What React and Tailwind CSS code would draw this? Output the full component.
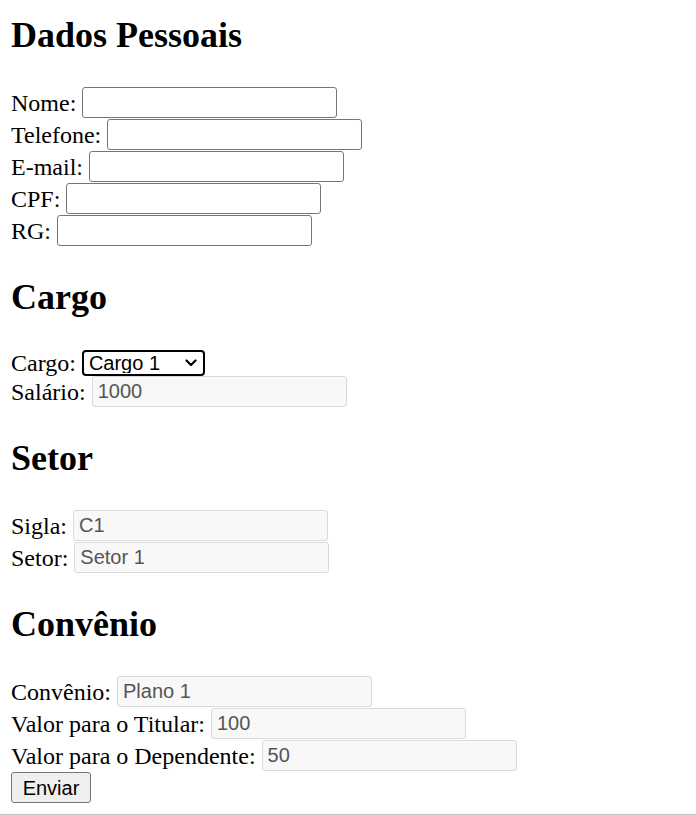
import React from "react";

const inputBase =
  "h-[31px] w-[255px] rounded-[3px] border-[1.5px] pl-[5px] pr-[3px] font-['Liberation_Sans',Arial,sans-serif] text-[20px] outline-none";

function Field({ label, value, readOnly }) {
  return (
    <div className="flex h-[32px] items-start">
      <label className="mt-[2px] leading-[28px]">{label}</label>
      <input
        type="text"
        defaultValue={value}
        readOnly={readOnly}
        className={
          inputBase +
          " ml-[6px]" +
          (readOnly
            ? " border-[#dadada] bg-[#f8f8f8] text-[#555555]"
            : " border-[#767676] bg-white text-black")
        }
      />
    </div>
  );
}

function Section({ title, first, children }) {
  return (
    <section>
      <h2
        className={
          "text-[36px] font-bold leading-[40px] mb-[32px] " +
          (first ? "mt-0" : "mt-[30px]")
        }
      >
        {title}
      </h2>
      {children}
    </section>
  );
}

export default function App() {
  return (
    <div className="box-border h-[815px] border-b border-[#c4c4c4] bg-white pt-[15px] pl-[11px] font-['Liberation_Serif','Times_New_Roman',serif] text-[24px] text-black">
      <form onSubmit={(e) => e.preventDefault()}>
        <Section title="Dados Pessoais" first>
          <Field label="Nome:" />
          <Field label="Telefone:" />
          <Field label="E-mail:" />
          <Field label="CPF:" />
          <Field label="RG:" />
        </Section>

        <Section title="Cargo">
          <div className="flex h-[27px] items-end">
            <label className="leading-[26px]">Cargo:</label>
            <div className="relative ml-[6px] flex">
              <select
                defaultValue="1"
                className="h-[26px] w-[123px] appearance-none rounded-[4px] border-[2.5px] border-black bg-white pl-[5px] font-['Liberation_Sans',Arial,sans-serif] text-[20px] leading-[20px] text-black outline-none"
              >
                <option value="1">Cargo 1</option>
                <option value="2">Cargo 2</option>
              </select>
              {/* seta do select */}
              <svg
                aria-hidden="true"
                className="pointer-events-none absolute right-[8px] top-[9px] h-[8px] w-[12px]"
                viewBox="0 0 12 8"
                fill="none"
                stroke="black"
                strokeWidth="2.2"
                strokeLinecap="round"
                strokeLinejoin="round"
              >
                <path d="M1.5 1.5 L6 6 L10.5 1.5" />
              </svg>
            </div>
          </div>
          <Field label="Salário:" value="1000" readOnly />
        </Section>

        <Section title="Setor">
          <Field label="Sigla:" value="C1" readOnly />
          <Field label="Setor:" value="Setor 1" readOnly />
        </Section>

        <Section title="Convênio">
          <Field label="Convênio:" value="Plano 1" readOnly />
          <Field label="Valor para o Titular:" value="100" readOnly />
          <Field label="Valor para o Dependente:" value="50" readOnly />
        </Section>

        <button
          type="submit"
          className="block h-[31px] w-[80px] rounded-[3px] border-[1.5px] border-[#767676] bg-[#efefef] font-['Liberation_Sans',Arial,sans-serif] text-[20px] leading-[20px] text-black"
        >
          Enviar
        </button>
      </form>
    </div>
  );
}
